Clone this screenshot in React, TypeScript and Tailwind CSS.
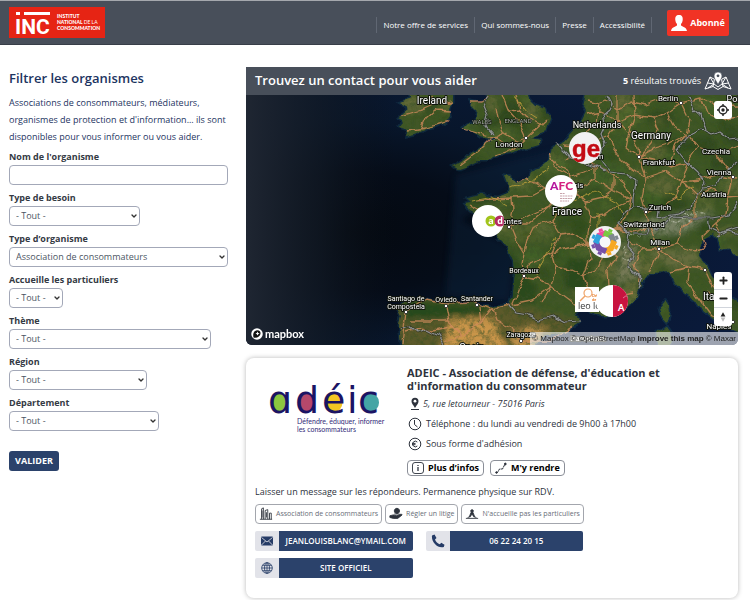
import React from 'react';
import { ChevronDown, Plus, Minus } from 'lucide-react';

interface MapLabel {
  text: string;
  x: number;
  y: number;
  size: number;
  faint?: boolean;
}

interface Filter {
  id: string;
  label: string;
  value: string;
  width: string;
}

const filters: Filter[] = [
  { id: 'besoin', label: 'Type de besoin', value: '- Tout -', width: 'w-[131px]' },
  { id: 'organisme', label: "Type d’organisme", value: 'Association de consommateurs', width: 'w-full' },
  { id: 'particuliers', label: 'Accueille les particuliers', value: '- Tout -', width: 'w-[54px]' },
  { id: 'theme', label: 'Thème', value: '- Tout -', width: 'w-[202px]' },
  { id: 'region', label: 'Région', value: '- Tout -', width: 'w-[138px]' },
  { id: 'departement', label: 'Département', value: '- Tout -', width: 'w-[150px]' },
];

const navLinks = ['Notre offre de services', 'Qui sommes-nous', 'Presse', 'Accessibilité'];

const mapLabels: MapLabel[] = [
  { text: 'Ireland', x: 186, y: 9, size: 10 },
  { text: 'WALES', x: 236, y: 29, size: 6, faint: true },
  { text: 'ENGLAND', x: 272, y: 28, size: 6, faint: true },
  { text: 'London', x: 263, y: 52, size: 8 },
  { text: 'Netherlands', x: 351, y: 33, size: 9 },
  { text: 'Germany', x: 405, y: 44, size: 10 },
  { text: 'Berlin', x: 422, y: 6, size: 8 },
  { text: 'Pol', x: 487, y: 7, size: 9 },
  { text: 'Frankfurt', x: 413, y: 70, size: 8 },
  { text: 'Czechia', x: 470, y: 59, size: 8 },
  { text: 'Vienna', x: 473, y: 80, size: 8 },
  { text: 'Austria', x: 468, y: 102, size: 8 },
  { text: 'm', x: 354, y: 64, size: 8 },
  { text: 'ris', x: 333, y: 93, size: 8 },
  { text: 'France', x: 321, y: 120, size: 10 },
  { text: 'Zurich', x: 414, y: 115, size: 8 },
  { text: 'Switzerland', x: 398, y: 132, size: 8 },
  { text: 'antes', x: 266, y: 129, size: 8 },
  { text: 'Milan', x: 414, y: 150, size: 8 },
  { text: 'Bordeaux', x: 278, y: 178, size: 7 },
  { text: 'Ital', x: 464, y: 205, size: 10 },
  { text: 'Naples', x: 473, y: 234, size: 8 },
  { text: 'Santiago de', x: 160, y: 206, size: 7 },
  { text: 'Compostela', x: 160, y: 214, size: 7 },
  { text: 'Oviedo', x: 200, y: 207, size: 7 },
  { text: 'Santander', x: 231, y: 206, size: 7 },
  { text: 'Zaragoza', x: 275, y: 242, size: 7 },
  { text: 'Spain', x: 226, y: 256, size: 10 },
  { text: 'Barcelona', x: 342, y: 246, size: 8 },
];

const cities = [
  [280, 43], [435, 8], [393, 62], [487, 82], [400, 117], [263, 132], [413, 154], [278, 181],
  [160, 217], [200, 211], [231, 210], [275, 246], [459, 175], [487, 227],
];

const land = [
  'M162 0 L165 4 L154 8 L163 13 L157 18 L151 24 L157 27 L153 32 L162 35 L160 41 L170 39 L181 34 L193 30 L201 28 L204 20 L203 13 L206 6 L206 -6 L162 -6 Z',
  'M242 -6 L240 6 L232 8 L224 6 L226 10 L231 15 L228 27 L217 33 L226 37 L234 42 L247 44 L252 43 L240 49 L228 57 L216 66 L207 71 L213 74 L222 71 L232 66 L240 66 L246 61 L264 58 L281 53 L291 50 L294 45 L284 43 L299 37 L303 24 L300 14 L289 11 L282 4 L280 -6 Z',
  'M341 -6 L337 12 L340 18 L334 30 L325 40 L319 47 L306 53 L304 65 L294 73 L284 77 L282 83 L269 87 L266 82 L259 81 L263 91 L262 98 L252 102 L244 101 L234 99 L221 103 L225 107 L219 108 L224 115 L236 121 L249 127 L254 137 L252 143 L261 152 L267 165 L269 180 L267 200 L264 210 L244 212 L227 208 L205 208 L181 204 L168 207 L161 206 L151 213 L155 221 L153 230 L156 256 L280 256 L296 243 L317 238 L334 227 L330 219 L338 214 L354 220 L367 220 L381 212 L389 203 L392 194 L404 178 L424 177 L430 188 L440 199 L450 205 L456 215 L466 223 L477 231 L498 240 L498 208 L479 198 L469 188 L462 174 L453 161 L454 146 L467 138 L472 143 L475 153 L484 155 L498 168 L498 -6 Z',
  'M419 204 L423 210 L424 218 L421 229 L415 222 L413 212 Z',
  'M410 237 L421 232 L426 239 L423 256 L412 256 Z',
];

const roads = [
  'M155 20 L178 13 L187 9 L206 8 M176 33 L181 22 L190 14 M204 26 L180 33 L162 36 M205 16 L190 15 M186 0 L188 9 L206 6',
  'M224 7 L236 7 L243 3 M217 34 L230 38 L247 43 L258 38 L271 46 L280 43 M256 0 L262 15 L272 26 L280 43 M271 0 L274 14 L282 23 L299 31 M258 38 L252 26 L249 12 M246 43 L234 55 L214 70 M281 43 L268 54 L250 60 M247 42 L260 49 L268 54 M280 43 L290 34 L300 25 M262 15 L274 14',
  'M341 5 L352 8 L360 4 L372 14 L386 7 L400 10 L416 4 L435 8 L455 3 L472 12 L492 11 M341 20 L354 17 L372 26 L389 20 L407 23 L420 17 L435 8 M388 0 L389 20 L384 36 L392 52 L393 62 M353 8 L350 27 L339 39 L334 53 L319 65 M372 0 L372 26 L363 40 L350 45 L338 52 L318 50 M407 23 L412 36 L405 49 L393 62 M435 8 L444 26 L441 39 L452 52 L470 58 L492 50 M420 17 L428 32 L441 39 L423 49 L409 53 L393 62 M372 26 L383 38 L380 52 L393 62 L400 81 L396 103 L400 117 M363 40 L367 53 L376 66 L390 77 L402 82 L420 76 L436 87 L453 85 L471 80 L492 83 M452 52 L443 65 L436 87 L429 103 L411 114 L400 117 M436 87 L450 101 L465 94 L482 103 L492 102 M470 58 L478 69 L487 82 L482 103 L480 119 L470 128 L474 141 M393 62 L411 66 L424 72 L441 68 M455 3 L461 19 L478 25 L492 22 M441 39 L429 50 L424 72',
  'M304 59 L310 72 L325 81 L338 77 L350 71 L367 80 L378 88 L385 104 L381 121 L371 134 L355 146 L342 149 M334 53 L343 64 L350 71 L350 85 L336 91 L325 93 L311 101 L304 111 L286 119 L264 130 M325 93 L323 76 L306 66 M325 93 L339 107 L345 122 L342 137 L342 149 L344 164 L337 181 L342 199 L337 216 M311 101 L299 94 L280 83 L270 86 M299 94 L286 101 L266 102 L247 103 L230 105 M264 130 L251 123 L239 118 L224 111 M266 102 L267 116 L264 130 L270 145 L278 158 L276 169 L278 181 L271 198 L266 210 M325 93 L317 112 L305 126 L288 132 L281 146 L278 158 M305 126 L314 140 L306 157 L310 172 L305 191 L296 207 M278 181 L292 184 L305 191 L324 205 L337 216 M314 140 L329 138 L342 149 M278 181 L287 168 L306 157 L322 153 L342 149 L358 158 L371 160 M342 149 L354 135 L371 134 L389 130 M339 107 L356 103 L367 95 L385 104 M350 85 L367 95 L367 80 M345 122 L359 120 L371 112 L385 104 M264 130 L282 130 L304 111 M310 172 L325 175 L337 181 M371 160 L362 176 L363 190 L376 201 L388 198 M337 181 L351 174 L358 158 M266 210 L285 206 L305 191 M338 199 L357 209 L376 201',
  'M156 248 L160 216 L180 204 L200 208 L227 207 L246 214 L264 210 M200 211 L203 226 L216 240 M246 214 L235 228 L216 240 L199 247 M246 214 L250 225 L266 232 L275 246 M160 237 L173 234 L188 236 L203 232 M164 226 L180 226 L203 226 M235 228 L233 211 M275 246 L302 246 L326 232',
  'M400 117 L402 132 L413 154 L431 149 L447 156 L459 154 M381 145 L397 154 L413 154 L404 176 M397 154 L389 170 L394 187 M413 154 L427 164 L443 172 L459 175 L466 190 L478 202 M443 172 L441 187 L451 201 L466 221 L487 227 M424 177 L443 172 M459 154 L456 141 L470 128 M402 132 L388 137 L371 134 M431 149 L436 132 L450 121 L450 101 M461 193 L474 214 L487 227',
];

const borders = [
  'M361 0 L366 9 L363 15 L357 20 L359 30 L355 39 L359 49 L354 57 L357 68 L364 77 L380 79 L390 86 L387 103 L387 112 L401 113 L412 116 L411 123 L419 121 L434 119 L446 113 L449 102 L459 88 L452 77 L438 64 L431 55 L440 42 L455 34 L464 39 L474 36 L484 44 L492 43',
  'M309 48 L316 54 L324 62 L337 67 L350 71 L359 77 M387 112 L377 120 L373 129 L383 137 L381 151 L388 159 L383 173 L396 184 L393 192 M387 139 L399 139 L403 130 L410 135 L419 128 L426 122 L445 123 L466 123 L483 120 L492 108 M462 124 L464 133 L474 138 L492 132 M472 142 L482 136 L492 139 M443 1 L448 14 L455 20 L460 35 M492 67 L477 79 L470 92 L456 93',
  'M263 211 L269 218 L281 220 L292 225 L308 221 L319 227 L334 226 M155 234 L163 231 L172 238 L181 235 L193 241 L198 250 M242 2 L238 11 L242 20 L239 31 L247 40',
];

// deterministic little helper so patches of forest and dry land stay put
const rand = (seed: number) => {
  const v = Math.sin(seed * 91.7) * 43758.5;
  return v - Math.floor(v);
};

const tones = ['#2a4417', '#526a2c', '#656e36', '#2f4a1a', '#436428', '#6c6e3b'];

const patches = Array.from({ length: 150 }, (_, i) => ({
  cx: 150 + rand(i + 1) * 342,
  cy: rand(i + 301) * 220,
  rx: 5 + rand(i + 601) * 13,
  ry: 3 + rand(i + 901) * 8,
  fill: tones[i % tones.length],
}));

const SatelliteMap: React.FC = () => (
  <svg className="absolute inset-0 h-full w-full" viewBox="0 0 492 250" preserveAspectRatio="xMinYMin slice" aria-label="Carte des organismes" role="img">
    <defs>
      <radialGradient id="ocean" cx="0.22" cy="0.55" r="0.8">
        <stop offset="0" stopColor="#040910" />
        <stop offset="0.3" stopColor="#050c18" />
        <stop offset="0.55" stopColor="#08162b" />
        <stop offset="1" stopColor="#0a1a3a" />
      </radialGradient>
      <linearGradient id="west" x1="0" x2="1">
        <stop offset="0" stopColor="#1f2632" />
        <stop offset="0.5" stopColor="#121a25" stopOpacity="0.7" />
        <stop offset="1" stopColor="#0a1018" stopOpacity="0" />
      </linearGradient>
      <filter id="soft" x="-20%" y="-20%" width="140%" height="140%">
        <feGaussianBlur stdDeviation="3" />
      </filter>
      <filter id="wiggle" filterUnits="userSpaceOnUse" x="0" y="-6" width="500" height="262">
        <feTurbulence type="fractalNoise" baseFrequency="0.09" numOctaves={2} seed={3} result="n" />
        <feDisplacementMap in="SourceGraphic" in2="n" scale="7" xChannelSelector="R" yChannelSelector="G" />
      </filter>
      <filter id="grain" x="0" y="0" width="100%" height="100%">
        <feTurbulence type="fractalNoise" baseFrequency="0.2" numOctaves={4} seed={7} />
        <feColorMatrix values="0 0 0 0 0.04  0 0 0 0 0.08  0 0 0 0 0.02  2.4 0 0 0 -1" />
      </filter>
      <clipPath id="landClip">
        {land.map(d => <path key={d} d={d} />)}
      </clipPath>
    </defs>
    <rect width="492" height="250" fill="url(#ocean)" />
    <rect width="150" height="250" fill="url(#west)" />
    <path d="M210 80 L330 50 L262 95 L215 125 L270 155 L262 205 L200 200" fill="#0c2540" opacity="0.4" filter="url(#soft)" />
    <g filter="url(#wiggle)">
      <g fill="none" stroke="#245064" strokeWidth="3" opacity="0.35">
        {land.map(d => <path key={d} d={d} />)}
      </g>
      <g clipPath="url(#landClip)">
        <rect y="-6" width="498" height="262" fill="#3f5725" />
        <g filter="url(#soft)">
          {patches.map((p, i) => <ellipse key={i} {...p} opacity="0.7" />)}
          <path d="M150 200 L270 210 L335 225 L290 256 L150 256" fill="#5b5a2a" />
          <path d="M205 222 L247 224 L262 256 L195 256 Z" fill="#c99549" />
          <path d="M265 236 L300 230 L290 256 L265 256 Z" fill="#bd904a" />
          <path d="M155 204 L245 210 L238 221 L160 225 Z" fill="#284a1a" />
          <path d="M260 150 L292 190 L288 208 L264 210 Z" fill="#2b481c" />
          <path d="M322 160 L345 164 L340 200 L318 194 Z" fill="#2c481d" />
          <path d="M393 128 L440 118 L470 117 L440 137 L400 143 Z" fill="#767f62" />
          <path d="M371 150 L391 149 L391 183 L370 190 Z" fill="#757855" />
          <path d="M398 154 L449 154 L456 172 L423 174 Z" fill="#656c3d" />
        </g>
        <rect x="150" width="348" height="256" filter="url(#grain)" opacity="0.65" />
        <path d="M397 133 l6 -4 l4 5 l5 -3 l6 4 M415 130 l7 -4 l8 3 l6 -5 l9 2 M428 121 l8 -3 l8 3 l9 -5 l8 2 M377 152 l4 6 l-3 5 l6 4 M384 139 l7 3 l6 -4" fill="none" stroke="#d0d4c6" strokeWidth="1.2" opacity="0.6" strokeDasharray="2 1 1 2" />
        <path d="M247 46 L252 40 L243 48 Z" fill="#a98f64" />
      </g>
      <g fill="none" stroke="#cf8a5c" strokeWidth="1.3" strokeLinejoin="round" opacity="0.8">
        {roads.map(d => <path key={d} d={d} />)}
      </g>
      <path d="M262 93 L285 87 L303 73 M226 105 L246 101 L262 110 M326 107 L350 96 L370 107 L375 120 M310 143 L297 166 L291 181 M268 0 L280 16 L291 23 M352 118 L352 140 M420 97 L432 104 L447 91" fill="none" stroke="#c9a63c" strokeWidth="1" opacity="0.75" />
      <g fill="none" stroke="#202326" strokeWidth="2.6" strokeLinejoin="round" opacity="0.55">
        {borders.map(d => <path key={d} d={d} />)}
      </g>
      <g fill="none" stroke="#8f9293" strokeWidth="1.2" strokeLinejoin="round">
        {borders.map(d => <path key={d} d={d} />)}
      </g>
    </g>
    {cities.map(([x, y]) => (
      <circle key={`${x}-${y}`} cx={x} cy={y} r="1.7" fill="#fff" stroke="#1c1c1c" strokeWidth="0.8" />
    ))}
    {mapLabels.map(l => (
      <text
        key={l.text}
        x={l.x}
        y={l.y}
        fontSize={l.size}
        textAnchor="middle"
        fill={l.faint ? '#a9b0a6' : '#fff'}
        stroke="#10140c"
        strokeWidth={l.faint ? 1 : 2}
        strokeLinejoin="round"
        paintOrder="stroke"
        className="font-['Roboto',sans-serif] font-normal"
      >
        {l.text}
      </text>
    ))}
  </svg>
);

const Pins: React.FC = () => (
  <>
    <button aria-label="adéic" className="absolute left-[226px] top-[110px] size-8 overflow-hidden rounded-full bg-white">
      <svg viewBox="0 0 32 32" className="size-8 font-['Open_Sans',sans-serif] font-bold">
        <circle cx="19" cy="16" r="5.500" fill="#a2c41c" />
        <circle cx="28" cy="16" r="5.500" fill="#b52b63" />
        <text x="19" y="19" fontSize="9" textAnchor="middle" fill="#fff">a</text>
        <text x="28" y="19" fontSize="9" textAnchor="middle" fill="#fff">d</text>
      </svg>
    </button>
    <button aria-label="ge" className="absolute left-[323px] top-[37px] size-8 overflow-hidden rounded-full bg-[#f1f1f3]">
      <svg viewBox="0 0 32 32" className="size-8 font-['Liberation_Sans',sans-serif] font-bold">
        <text x="3" y="25" fontSize="24" fill="#c30b14" stroke="#c30b14" strokeWidth="0.500">ge</text>
      </svg>
    </button>
    <button aria-label="AFC" className="absolute left-[299px] top-[80px] size-8 overflow-hidden rounded-full bg-white">
      <svg viewBox="0 0 32 32" className="size-8 font-['Lato',sans-serif]">
        <text x="5" y="15" fontSize="12" fontWeight="900" fill="#b5179e">A<tspan fill="#d5217f">FC</tspan></text>
        <g stroke="#b98c94" strokeWidth="0.8">
          <path d="M15 18.500h5M15 21h13M15 23.500h12M15 26h9" strokeDasharray="2 0.600" />
        </g>
      </svg>
    </button>
    <button aria-label="Associations" className="absolute left-[343px] top-[131px] size-8 overflow-hidden rounded-full bg-[#f1f1f3]">
      <svg viewBox="0 0 32 32" className="size-8">
        {['#ee4b9b', '#7ac843', '#7f8790', '#f7a823', '#f7a823', '#7650a8', '#7650a8', '#2ea3dd'].map((c, i) => (
          <g key={i} transform={`rotate(${i * 45 - 20} 16 16)`} fill={c}>
            <rect x="11" y="5" width="9" height="6" rx="0.500" />
            <rect x="14" y="2" width="4" height="3" />
          </g>
        ))}
        <circle cx="16" cy="16" r="5.500" fill="#f7f7f9" />
      </svg>
    </button>
    <button aria-label="leo lagrange" className="absolute left-[329px] top-[192px] h-[25px] w-6 overflow-hidden bg-white">
      <svg viewBox="0 0 24 25" className="h-[25px] w-6">
        <circle cx="13" cy="6" r="4" fill="none" stroke="#efa468" strokeWidth="1.200" />
        <path d="M10 9L5 14" stroke="#efa468" strokeWidth="1.500" />
        <text x="17" y="10" fontSize="4" fontWeight="700" fill="#e8812e" className="font-['Lato',sans-serif]">Dé</text>
        <text x="17" y="14" fontSize="4" fontWeight="700" fill="#e8812e" className="font-['Lato',sans-serif]">des</text>
        <text x="3" y="22" fontSize="9" fill="#333" className="font-['Open_Sans',sans-serif]">leo lo</text>
      </svg>
    </button>
    <button aria-label="A" className="absolute left-[350px] top-[190px] size-8 overflow-hidden rounded-full bg-white">
      <svg viewBox="0 0 32 32" className="size-8">
        <rect x="17" width="15" height="32" fill="#c8133f" />
        <path d="M27 13q3-3 5-2" stroke="#dd7d92" fill="none" />
        <text x="22" y="26" fontSize="9" fontWeight="900" fill="#fff" className="font-['Lato',sans-serif]">A</text>
      </svg>
    </button>
  </>
);

const MapPanel: React.FC = () => (
  <section className="overflow-hidden rounded-b-md">
    <div className="flex h-7 items-center bg-[#484f5a] pl-[9px] pr-1.5 text-white">
      <h2 className="flex-1 text-[13px] font-semibold">Trouvez un contact pour vous aider</h2>
      <p className="text-[9px]"><b>5</b> résultats trouvés</p>
      <svg viewBox="0 0 28 20" className="ml-[3px] h-5 w-7" fill="none" stroke="#fff" strokeWidth="1">
        <path d="M6 6L1 18L9 15.500L14 18.500L19 15.500L27 18L22 6L18 8M6 6L10 8M9 15.500L10.500 8M19 15.500L17.500 8M3.500 12L10 13L14 16L18 13L24.500 12M6 6L10 13L4 17M22 6L18 13L24 17" />
        <path d="M14 13.500C12 9.500 10 7.500 10 5a4 4 0 1 1 8 0c0 2.500-2 4.500-4 8.500z" fill="#fff" stroke="#484f5a" strokeWidth="0.600" />
        <circle cx="14" cy="4.800" r="1.400" fill="#484f5a" stroke="none" />
      </svg>
    </div>
    <div className="relative h-[250px] overflow-hidden">
      <SatelliteMap />
      <Pins />
      <button aria-label="Me localiser" className="absolute right-1.5 top-1.5 flex size-[18px] items-center justify-center rounded-[3px] bg-white">
        <svg viewBox="0 0 14 14" className="size-3.5" fill="none" stroke="#222" strokeWidth="1.400">
          <circle cx="7" cy="7" r="4" />
          <circle cx="7" cy="7" r="1.700" fill="#222" stroke="none" />
          <path d="M7 1v2M7 11v2M1 7h2M11 7h2" />
        </svg>
      </button>
      <div className="absolute bottom-[19px] right-1.5 flex w-[18px] flex-col divide-y divide-gray-300 rounded-[3px] bg-white text-[#222]">
        <button aria-label="Zoomer" className="flex h-[18px] items-center justify-center"><Plus size={11} strokeWidth={4} /></button>
        <button aria-label="Dézoomer" className="flex h-[18px] items-center justify-center"><Minus size={11} strokeWidth={4} /></button>
        <button aria-label="Orienter au nord" className="flex h-[18px] items-center justify-center">
          <svg viewBox="0 0 10 14" className="h-3 w-2">
            <path d="M5 1L8 6.500H2z" fill="#222" />
            <path d="M5 13L8 7.500H2z" fill="#bbb" />
          </svg>
        </button>
      </div>
      <a href="#mapbox" className="absolute bottom-[5px] left-[5px] flex items-center gap-[2px] text-white">
        <svg viewBox="0 0 24 24" className="size-3">
          <circle cx="12" cy="12" r="11.500" fill="#fff" />
          <path d="M5 19C3 11 6 5 12.500 4.500a6.500 6.500 0 0 1 6.500 7C18.500 17 12 20.500 5 19z" fill="#111" />
          <path d="M13 7l1.400 2.800L17.300 11l-2.900 1.300L13 15l-1.300-2.700L9 11l2.700-1.200z" fill="#fff" />
        </svg>
        <span className="font-['Lato',sans-serif] text-[11px] font-bold leading-3">mapbox</span>
      </a>
      <p className="absolute bottom-0 right-0 flex h-[13px] items-center gap-0.5 bg-white/60 px-[2px] font-['Liberation_Sans',sans-serif] text-[8px] text-[#222]">
        <a href="#mapbox">© Mapbox</a>
        <a href="#osm">© OpenStreetMap</a>
        <a href="#improve" className="font-bold">Improve this map</a>
        <a href="#maxar">© Maxar</a>
      </p>
    </div>
  </section>
);

const Sidebar: React.FC = () => (
  <form className="w-[219px] shrink-0" onSubmit={e => e.preventDefault()}>
    <h1 className="mt-[2px] text-[13px] font-semibold leading-[18px] text-[#1d3461]">Filtrer les organismes</h1>
    <p className="mt-[7px] whitespace-nowrap text-[9px] font-medium leading-[17px] text-[#1d3461]">
      Associations de consommateurs, médiateurs,<br />
      organismes de protection et d'information... ils sont<br />
      disponibles pour vous informer ou vous aider.
    </p>
    <label htmlFor="nom" className="mt-[5px] block text-[9px] font-bold leading-[13px] text-[#343a44]">Nom de l'organisme</label>
    <input id="nom" type="text" className="mt-[2px] block h-5 w-full rounded border border-[#a3a8b8] bg-white px-1.5 text-[9px]" />
    {filters.map(f => (
      <div key={f.id}>
        <label htmlFor={f.id} className="mt-[6px] block text-[9px] font-bold leading-[13px] text-[#343a44]">{f.label}</label>
        <div className={`relative mt-[2px] ${f.width}`}>
          <select id={f.id} className="block h-5 w-full appearance-none rounded border border-[#a3a8b8] bg-white pl-1.5 pr-4 text-[9px] text-[#4b5563]">
            <option>{f.value}</option>
          </select>
          <ChevronDown size={8} strokeWidth={4} className="pointer-events-none absolute right-[2px] top-[6px] text-[#333]" />
        </div>
      </div>
    ))}
    <button className="mt-5 h-5 w-[50px] rounded-[3px] bg-[#2b426b] text-[9px] font-bold text-white">VALIDER</button>
  </form>
);

const tags = [
  {
    label: 'Association de consommateurs',
    icon: <path d="M1 14h14M3 14V2l2-1v13M7 14V4l3-1v11M12 14V7h2v7M3.500 4v8M8.500 6v6" />,
  },
  {
    label: 'Régler un litige',
    icon: <path d="M9 1.500a3 3 0 1 0 .1 0zM1 10l4-1 4 1 5-2 1 1-5 4H5l-4-1zM6 8h6" fill="currentColor" />,
  },
  {
    label: "N'accueille pas les particuliers",
    icon: <path d="M1 13h14M8 3a1.500 1.500 0 1 0 .1 0zM7 6h2l2 5h-1l-2-3-2 3H5zM3 12l3-1M13 12l-3-1" fill="currentColor" />,
  },
];

const actions = [
  {
    label: 'JEANLOUISBLANC@YMAIL.COM',
    href: '#mail',
    icon: (
      <svg viewBox="0 0 14 14" className="size-3.5">
        <rect x="1" y="2.500" width="12" height="9" rx="1" fill="#253b66" />
        <path d="M1.500 3.500L7 8l5.500-4.500M1.500 11l4-4M12.500 11l-4-4" fill="none" stroke="#e4e5ea" strokeWidth="0.800" />
      </svg>
    ),
  },
  {
    label: '06 22 24 20 15',
    href: '#tel',
    icon: (
      <svg viewBox="0 0 14 14" className="size-3.5">
        <path d="M1 1.500L3.500 .5 5.500 4 4 5.500C5 8 6.500 9.500 8.800 10.200L10.300 8.700 13.500 10.700 12.800 13C7 15 0 8 1 1.500z" fill="#253b66" />
      </svg>
    ),
  },
  {
    label: 'SITE OFFICIEL',
    href: '#site',
    icon: (
      <svg viewBox="0 0 14 14" className="size-3.5" fill="none" stroke="#253b66" strokeWidth="0.800">
        <circle cx="7" cy="7" r="5.300" />
        <ellipse cx="7" cy="7" rx="2.500" ry="5.300" />
        <path d="M7 1.700v10.600M1.700 7h10.600M2.500 4.300h9M2.500 9.700h9" />
      </svg>
    ),
  },
];

const ContactCard: React.FC = () => (
  <article className="mt-[13px] rounded-lg bg-white px-[9px] pb-5 pt-2 text-[9px] text-[#2d323c] shadow-[0_0_5px_rgba(0,0,0,0.28)]">
    <div className="flex">
      <div className="w-[152px] shrink-0 pl-3 pt-2">
        <svg viewBox="0 0 120 60" className="h-[60px] w-[120px]" role="img" aria-label="adéic">
          <ellipse cx="13" cy="28.500" rx="8.500" ry="9.500" fill="#8dc63f" />
          <ellipse cx="39.500" cy="28.500" rx="8.500" ry="9.500" fill="#b5486b" />
          <ellipse cx="67" cy="28.500" rx="8.500" ry="9.500" fill="#f3c623" />
          <ellipse cx="103" cy="28.500" rx="9" ry="9.500" fill="#45a5a5" />
          <g className="font-['DejaVu_Sans',sans-serif]" fontSize="38" fill="#1b1464">
            <text y="39" x="1 28 55 80 91">ɑdéic</text>
          </g>
          <g className="font-['Lato',sans-serif]" fontSize="7" fill="#332a78">
            <text x="30" y="50">Défendre, éduquer, informer</text>
            <text x="30" y="58">les consommateurs</text>
          </g>
        </svg>
      </div>
      <div>
        <h3 className="text-[11px] font-bold leading-[13px]">
          ADEIC - Association de défense, d'éducation et<br />d'information du consommateur
        </h3>
        <ul>
          <li className="flex h-5 items-center gap-0.5 pt-1">
            <svg viewBox="0 0 14 14" className="size-3.5">
              <path d="M8 11C6 7.500 4.500 6.500 4.500 4.200a3.500 3.500 0 1 1 7 0C11.500 6.500 10 7.500 8 11z" fill="#2d323c" />
              <circle cx="8" cy="4.200" r="1.400" fill="#fff" />
              <path d="M4 12.500h8" stroke="#2d323c" />
            </svg>
            <address className="italic">5, rue letourneur - 75016 Paris</address>
          </li>
          <li className="flex h-5 items-center gap-1 pl-px pt-1">
            <svg viewBox="0 0 14 14" className="size-3.5" fill="none" stroke="#2d323c">
              <circle cx="7" cy="7" r="5.800" />
              <path d="M6.500 3v4.500l3 2.500" />
            </svg>
            Téléphone : du lundi au vendredi de 9h00 à 17h00
          </li>
          <li className="flex h-5 items-center gap-1 pl-px pt-1">
            <svg viewBox="0 0 14 14" className="size-3.5" fill="none" stroke="#2d323c">
              <circle cx="7" cy="7" r="5.800" />
              <path d="M9.300 5a2.800 2.800 0 1 0 0 4M4 6.400h3.500M4 7.700h3.500" />
            </svg>
            Sous forme d'adhésion
          </li>
        </ul>
        <div className="mt-2 flex gap-1.5 font-bold text-black">
          <button className="flex h-4 items-center gap-1 rounded border border-[#8b8f98] px-1">
            <svg viewBox="0 0 12 12" className="size-3" fill="none" stroke="#2d323c" strokeWidth="0.900">
              <rect x="0.500" y="0.500" width="11" height="11" rx="2.500" />
              <path d="M6 3v1M6 5v4" strokeWidth="1.300" />
            </svg>
            Plus d’infos
          </button>
          <button className="flex h-4 items-center gap-1 rounded border border-[#8b8f98] px-1">
            <svg viewBox="0 0 12 12" className="size-3" fill="none" stroke="#2d323c">
              <path d="M1 10.500h1.500l2-3.500h3l2-4" strokeDasharray="3 0.500" />
              <circle cx="1.500" cy="10.500" r="0.800" fill="#2d323c" />
              <circle cx="10.300" cy="2" r="0.900" fill="#2d323c" />
            </svg>
            M'y rendre
          </button>
        </div>
      </div>
    </div>
    <p className="mt-2 leading-4">Laisser un message sur les répondeurs. Permanence physique sur RDV.</p>
    <ul className="mt-1 flex gap-[3px] text-[7px] text-[#686d78]">
      {tags.map(t => (
        <li key={t.label} className="flex h-5 items-center gap-[3px] whitespace-nowrap rounded border border-[#a3a6ad] px-[3px]">
          <svg viewBox="0 0 16 16" className="size-3.5" fill="none" stroke="currentColor" color="#2d323c">{t.icon}</svg>
          {t.label}
        </li>
      ))}
    </ul>
    <div className="mt-[7px] grid w-[328px] grid-cols-2 gap-x-[13px] gap-y-[7px]">
      {actions.map(a => (
        <a key={a.label} href={a.href} className="flex h-5 overflow-hidden rounded-[2px] text-[8px] font-semibold text-white">
          <span className="flex w-6 items-center justify-center bg-[#e2e3e9]">{a.icon}</span>
          <span className="flex flex-1 items-center justify-center bg-[#2b426b]">{a.label}</span>
        </a>
      ))}
    </div>
  </article>
);

const App: React.FC = () => (
  <div className="min-h-screen bg-white pb-1 font-['Open_Sans',sans-serif]">
    <header className="flex h-[45px] items-center border-b border-t border-b-[#383e48] border-t-[#a5a8ad] bg-[#484f5a] pl-[9px] pr-[21px] text-white">
      <a href="#accueil" className="flex">
        <svg viewBox="0 0 96 31" className="h-[31px] w-24" role="img" aria-label="INC Institut national de la consommation">
          <rect width="96" height="31" fill="#e62414" />
          <rect x="7" y="5" width="4" height="3" fill="#fff" />
          <rect x="15" y="5" width="26" height="3" fill="#fff" />
          <text x="6" y="27" fontSize="21" fontWeight="700" fill="#fff" className="font-['Roboto',sans-serif]">INC</text>
          <g fill="#fff" fontSize="5" fontWeight="900" className="font-['Lato',sans-serif]">
            <text x="48" y="11">INSTITUT</text>
            <text x="48" y="17">NATIONAL <tspan fontWeight="400">DE LA</tspan></text>
            <text x="48" y="23">CONSOMMATION</text>
          </g>
        </svg>
      </a>
      <nav className="ml-auto mt-1 flex divide-x divide-[#606773] border-x border-[#606773] text-[8px] leading-4">
        {navLinks.map(l => <a key={l} href="#nav" className="px-1.5">{l}</a>)}
      </nav>
      <button className="ml-[15px] flex h-[26px] w-[62px] items-center justify-center gap-[3px] rounded-[2px] bg-[#f13325] text-[9px] font-bold">
        <svg viewBox="0 0 16 16" className="size-4" fill="#fff">
          <path d="M8 0c3 0 4 2 3.700 5C11.500 7 10.800 8 10 9v1.500c1 1 5.500 1.500 6 5.500H0c.5-4 5-4.500 6-5.500V9C5.200 8 4.500 7 4.300 5 4 2 5 0 8 0z" />
        </svg>
        Abonné
      </button>
    </header>
    <main className="flex gap-[18px] pl-[9px] pr-3 pt-[22px]">
      <Sidebar />
      <div className="min-w-0 flex-1">
        <MapPanel />
        <ContactCard />
      </div>
    </main>
  </div>
);

export default App;
